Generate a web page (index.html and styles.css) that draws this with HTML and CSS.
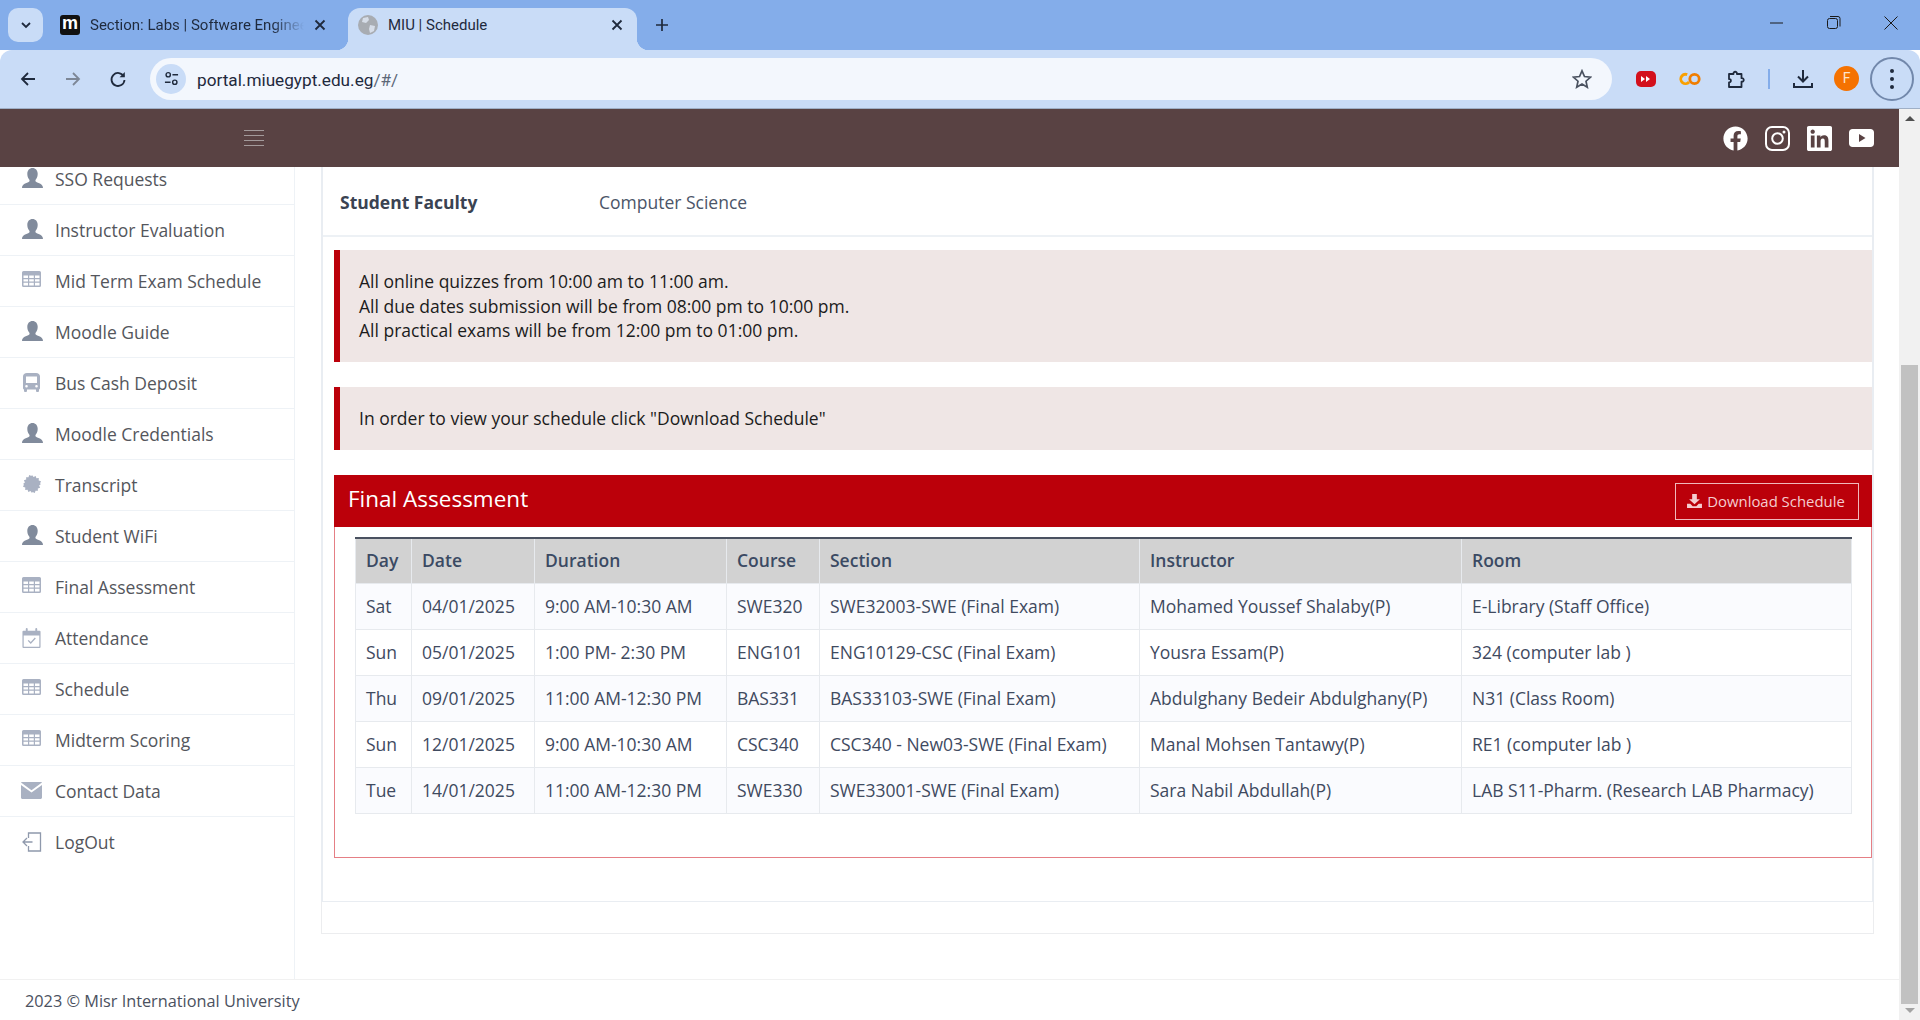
FILE: index.html
```html
<!DOCTYPE html>
<html lang="en">
<head>
    <meta charset="UTF-8">
    <meta name="viewport" content="width=device-width, initial-scale=1.0">
    <title>MIU | Schedule</title>
    <link rel="stylesheet" href="styles.css">
</head>
<body>
    <svg class="sprites" width="0" height="0">
        <symbol id="i-user" viewBox="0 0 21 20"><path d="M0 20c0-4.600 4.600-4.700 7.300-6.600.5-.6.3-1.500-.3-2.200C5.800 9.900 5.300 8 5.300 5.800 5.300 2.400 7.500 0 10.500 0s5.200 2.400 5.200 5.800c0 2.200-.5 4.100-1.700 5.400-.6.700-.8 1.600-.3 2.200C16.400 15.300 21 15.400 21 20z"/></symbol>
        <symbol id="i-table" viewBox="0 0 19 16"><path fill-rule="evenodd" d="M1.500 0h16A1.500 1.500 0 0 1 19 1.500v13a1.500 1.500 0 0 1-1.500 1.500h-16A1.500 1.500 0 0 1 0 14.500v-13A1.500 1.500 0 0 1 1.500 0zM1.500 4.500v2.500h4.500V4.500zm5.700 0v2.500h4.600V4.500zm5.800 0v2.500h4.500V4.500zM1.500 8.200v2.400h4.500V8.200zm5.700 0v2.400h4.600V8.200zm5.800 0v2.400h4.500V8.200zM1.500 11.800v2.700h4.500v-2.700zm5.700 0v2.700h4.600v-2.700zm5.800 0v2.700h4.500v-2.700z"/></symbol>
        <symbol id="i-bus" viewBox="0 0 17 19"><path fill-rule="evenodd" d="M4 0h9c2.400 0 4 1.300 4 3.500V15c0 .8-.4 1.200-1 1.400V18a1 1 0 0 1-1 1h-1a1 1 0 0 1-1-1v-1.500H4V18a1 1 0 0 1-1 1H2a1 1 0 0 1-1-1v-1.600C.4 16.200 0 15.800 0 15V3.500C0 1.300 1.600 0 4 0zM3 3.500v6.500h11V3.500zM3.500 12a1.300 1.300 0 1 0 0 2.600 1.300 1.300 0 0 0 0-2.600zm10 0a1.300 1.300 0 1 0 0 2.600 1.300 1.300 0 0 0 0-2.600z"/></symbol>
        <symbol id="i-cog" viewBox="0 0 18 18"><path d="M9 0l1.500 1.900 2.200-1 .7 2.300 2.400-.1-.1 2.400 2.300.7-1 2.200L18 9l-1.900 1.500 1 2.200-2.300.7.100 2.400-2.400-.1-.7 2.300-2.200-1L9 18l-1.500-1.900-2.200 1-.7-2.300-2.400.1.100-2.400-2.300-.7 1-2.200L0 9l1.900-1.500-1-2.200 2.300-.7-.1-2.400 2.400.1.700-2.300 2.200 1z"/></symbol>
        <symbol id="i-calendar" viewBox="0 0 19 21"><path fill-rule="evenodd" d="M1 3h2.500V1a1 1 0 0 1 2 0v2h8V1a1 1 0 0 1 2 0v2H18a1 1 0 0 1 1 1v16a1 1 0 0 1-1 1H1a1 1 0 0 1-1-1V4a1 1 0 0 1 1-1zM1.300 8v11.700h16.400V8z"/><path d="M5.500 13.500l1-1 2.200 2.200 4.300-4.700 1 1-5.300 5.700z"/></symbol>
        <symbol id="i-mail" viewBox="0 0 21 17"><path d="M1 0h19c.5 0 1 .3 1 .6L10.500 8.200 0 .6C0 .3.500 0 1 0z"/><path d="M0 3l10.500 7.500L21 3v12.500c0 .8-.7 1.500-1.500 1.500h-18C.7 17 0 16.300 0 15.500z"/></symbol>
        <symbol id="i-logout" viewBox="0 0 20 20"><path d="M7 6V1h12v18H7v-5M11 10H1.500M5.500 6l-4 4 4 4" fill="none" stroke="currentColor" stroke-width="1.300"/></symbol>
        <symbol id="i-cross" viewBox="0 0 12 12"><path d="M1.500 1.500l9 9M10.500 1.500l-9 9" fill="none" stroke="currentColor" stroke-width="1.800"/></symbol>
    </svg>

    <div class="tabstrip">
        <div class="tab-menu">
            <svg class="icon-12" viewBox="0 0 12 12"><path d="M2 4l4 4 4-4" fill="none" stroke="#1f2a3d" stroke-width="1.800"/></svg>
        </div>
        <div class="tab">
            <span class="moodle-logo">m</span>
            <span class="tab-title tab-title-fade">Section: Labs | Software Engineering</span>
            <svg class="icon-12"><use href="#i-cross"/></svg>
        </div>
        <div class="tab tab-active">
            <svg class="globe" viewBox="0 0 20 20"><circle cx="10" cy="10" r="10" fill="#a8acb2"/><path d="M5 3l5-1 1 3-3 3-4-1zM12 10l5 1-1 5-4 2-1-4z" fill="#d6dde8"/></svg>
            <span class="tab-title">MIU | Schedule</span>
            <svg class="icon-12"><use href="#i-cross"/></svg>
        </div>
        <svg class="new-tab" viewBox="0 0 14 14"><path d="M7 1v12M1 7h12" stroke="#1f2a3d" stroke-width="1.700"/></svg>
        <div class="window-controls">
            <svg viewBox="0 0 14 14"><path d="M0 7h13" stroke="#1a1a1a" stroke-width="1"/></svg>
            <svg viewBox="0 0 14 14"><rect x=".5" y="2.500" width="10" height="10" rx="2" fill="none" stroke="#1a1a1a"/><path d="M3 .5h8a2 2 0 0 1 2 2v8" fill="none" stroke="#1a1a1a"/></svg>
            <svg viewBox="0 0 14 14"><path d="M.5.500l13 13M13.500.500l-13 13" stroke="#1a1a1a"/></svg>
        </div>
    </div>

    <div class="toolbar">
        <svg class="nav-btn" viewBox="0 0 18 18"><path d="M16 9H3M9 3L3 9l6 6" fill="none" stroke="#1f2a3d" stroke-width="1.800"/></svg>
        <svg class="nav-btn" viewBox="0 0 18 18"><path d="M2 9h13M9 3l6 6-6 6" fill="none" stroke="#7d8796" stroke-width="1.800"/></svg>
        <svg class="nav-btn" viewBox="0 0 18 18"><path d="M14.800 6.500A6.500 6.500 0 1 0 15.500 10" fill="none" stroke="#1f2a3d" stroke-width="1.800"/><path d="M15.800 2v5.200h-5.200z" fill="#1f2a3d"/></svg>
        <div class="omnibox">
            <span class="site-info">
                <svg viewBox="0 0 16 16"><circle cx="4.500" cy="4" r="2.300" fill="none" stroke="#1f2a3d" stroke-width="1.500"/><path d="M9 4h6M1 12h6" stroke="#1f2a3d" stroke-width="1.500"/><circle cx="11.500" cy="12" r="2.300" fill="none" stroke="#1f2a3d" stroke-width="1.500"/></svg>
            </span>
            <span class="url">portal.miuegypt.edu.eg<span class="url-rest">/#/</span></span>
            <svg class="star" viewBox="0 0 20 20"><path d="M10 1.800l2.500 5.700 6.100.6-4.600 4.100 1.300 6-5.300-3.100-5.300 3.100 1.300-6L1.400 8.100l6.100-.6z" fill="none" stroke="#4a5260" stroke-width="1.700"/></svg>
        </div>
        <div class="extensions">
            <svg class="ext-red" viewBox="0 0 20 16"><rect width="20" height="16" rx="5" fill="#d3101c"/><path d="M5 5l4 3-4 3zM10 5l4 3-4 3z" fill="#fff"/></svg>
            <svg class="ext-colab" viewBox="0 0 22 14"><circle cx="6.500" cy="7" r="4.700" fill="none" stroke="#f9a000" stroke-width="2.800" stroke-dasharray="20 10" transform="rotate(40 6.500 7)"/><circle cx="15.500" cy="7" r="4.700" fill="none" stroke="#f07d00" stroke-width="2.800"/></svg>
            <svg class="ext-puzzle" viewBox="0 0 20 20"><path d="M2 5h4.500c-.6-3 4-3 3.400 0H14.500v4.200c3-.6 3 4 0 3.400V18H2v-4.700c2.500.4 2.500-3.600 0-3.200z" fill="none" stroke="#1f2a3d" stroke-width="1.800" stroke-linejoin="round"/></svg>
            <span class="ext-divider"></span>
            <svg class="ext-download" viewBox="0 0 20 20"><path d="M10 1v11M5 7.500l5 5 5-5" fill="none" stroke="#1f2a3d" stroke-width="2"/><path d="M1 14v4h18v-4" fill="none" stroke="#1f2a3d" stroke-width="2"/></svg>
            <span class="avatar">F</span>
            <span class="kebab"><i></i><i></i><i></i></span>
        </div>
    </div>

    <div class="page">
        <div class="viewport">
            <header class="topbar">
                <div class="hamburger"><i></i><i></i><i></i><i></i></div>
                <div class="socials">
                    <svg viewBox="0 0 512 512"><path d="M504 256C504 119 393 8 256 8S8 119 8 256c0 123.780 90.690 226.380 209.250 245V327.690h-63V256h63v-54.640c0-62.150 37-96.480 93.670-96.480 27.140 0 55.520 4.840 55.520 4.840v61h-31.280c-30.800 0-40.410 19.120-40.410 38.730V256h68.780l-11 71.690h-57.780V501C413.310 482.380 504 379.780 504 256z"/></svg>
                    <svg viewBox="0 0 25 25"><rect x="1" y="1" width="23" height="23" rx="6" fill="none" stroke="#fff" stroke-width="2"/><circle cx="12.500" cy="12.500" r="5.300" fill="none" stroke="#fff" stroke-width="2"/><circle cx="19" cy="6" r="1.500"/></svg>
                    <svg viewBox="0 32 448 448" preserveAspectRatio="none"><path d="M416 32H31.900C14.300 32 0 46.500 0 64.300v383.400C0 465.500 14.300 480 31.900 480H416c17.600 0 32-14.500 32-32.300V64.300c0-17.800-14.400-32.300-32-32.300zM135.400 416H69V202.200h66.500V416zm-33.200-243c-21.300 0-38.500-17.300-38.500-38.500S80.900 96 102.200 96c21.200 0 38.500 17.300 38.500 38.500 0 21.300-17.200 38.500-38.500 38.500zm282.100 243h-66.400V312c0-24.800-.5-56.700-34.500-56.700-34.600 0-39.900 27-39.900 54.900V416h-66.400V202.200h63.700v29.200h.9c8.900-16.800 30.600-34.500 62.900-34.500 67.200 0 79.700 44.300 79.700 101.900V416z"/></svg>
                    <svg viewBox="0 0 25 18" class="social-yt"><path fill-rule="evenodd" d="M3.500 0h18C23.500 0 25 1.500 25 3.500v11c0 2-1.500 3.500-3.500 3.500h-18C1.500 18 0 16.500 0 14.500v-11C0 1.500 1.500 0 3.500 0zM10 5v8l6.500-4z"/></svg>
                </div>
            </header>

            <div class="layout">
                <nav class="sidebar">
                    <a class="nav-item"><svg class="nav-icon icon-dark"><use href="#i-user"/></svg>SSO Requests</a>
                    <a class="nav-item"><svg class="nav-icon icon-dark"><use href="#i-user"/></svg>Instructor Evaluation</a>
                    <a class="nav-item"><svg class="nav-icon nav-icon-table"><use href="#i-table"/></svg>Mid Term Exam Schedule</a>
                    <a class="nav-item"><svg class="nav-icon icon-dark"><use href="#i-user"/></svg>Moodle Guide</a>
                    <a class="nav-item"><svg class="nav-icon nav-icon-bus"><use href="#i-bus"/></svg>Bus Cash Deposit</a>
                    <a class="nav-item"><svg class="nav-icon icon-dark"><use href="#i-user"/></svg>Moodle Credentials</a>
                    <a class="nav-item"><svg class="nav-icon nav-icon-cog"><use href="#i-cog"/></svg>Transcript</a>
                    <a class="nav-item"><svg class="nav-icon icon-dark"><use href="#i-user"/></svg>Student WiFi</a>
                    <a class="nav-item"><svg class="nav-icon nav-icon-table"><use href="#i-table"/></svg>Final Assessment</a>
                    <a class="nav-item"><svg class="nav-icon nav-icon-cal"><use href="#i-calendar"/></svg>Attendance</a>
                    <a class="nav-item"><svg class="nav-icon nav-icon-table"><use href="#i-table"/></svg>Schedule</a>
                    <a class="nav-item"><svg class="nav-icon nav-icon-table"><use href="#i-table"/></svg>Midterm Scoring</a>
                    <a class="nav-item"><svg class="nav-icon nav-icon-mail"><use href="#i-mail"/></svg>Contact Data</a>
                    <a class="nav-item nav-item-last"><svg class="nav-icon nav-icon-logout"><use href="#i-logout"/></svg>LogOut</a>
                </nav>

                <main class="content">
                    <div class="card-body">
                        <div class="info-row">
                            <b class="info-label">Student Faculty</b>
                            <span class="info-value">Computer Science</span>
                        </div>
                        <div class="alert alert-tall">
                            All online quizzes from 10:00 am to 11:00 am.<br>
                            All due dates submission will be from 08:00 pm to 10:00 pm.<br>
                            All practical exams will be from 12:00 pm to 01:00 pm.
                        </div>
                        <div class="alert alert-short">In order to view your schedule click "Download Schedule"</div>
                        <section class="panel">
                            <div class="panel-head">
                                <h2>Final Assessment</h2>
                                <button class="download-btn">
                                    <svg viewBox="0 0 16 15"><path d="M5.500 0h5v5.500h3.300L8 11 2.200 5.500h3.300z"/><path d="M0 10.500h3.500L6 13h4l2.500-2.500H16V15H0z"/></svg>
                                    Download Schedule
                                </button>
                            </div>
                            <div class="panel-body">
                                <table class="schedule">
                                    <colgroup>
                                        <col class="col-day"><col class="col-date"><col class="col-duration"><col class="col-course"><col class="col-section"><col class="col-instructor"><col>
                                    </colgroup>
                                    <thead>
                                        <tr><th>Day</th><th>Date</th><th>Duration</th><th>Course</th><th>Section</th><th>Instructor</th><th>Room</th></tr>
                                    </thead>
                                    <tbody>
                                        <tr><td>Sat</td><td>04/01/2025</td><td>9:00 AM-10:30 AM</td><td>SWE320</td><td>SWE32003-SWE (Final Exam)</td><td>Mohamed Youssef Shalaby(P)</td><td>E-Library (Staff Office)</td></tr>
                                        <tr><td>Sun</td><td>05/01/2025</td><td>1:00 PM- 2:30 PM</td><td>ENG101</td><td>ENG10129-CSC (Final Exam)</td><td>Yousra Essam(P)</td><td>324 (computer lab )</td></tr>
                                        <tr><td>Thu</td><td>09/01/2025</td><td>11:00 AM-12:30 PM</td><td>BAS331</td><td>BAS33103-SWE (Final Exam)</td><td>Abdulghany Bedeir Abdulghany(P)</td><td>N31 (Class Room)</td></tr>
                                        <tr><td>Sun</td><td>12/01/2025</td><td>9:00 AM-10:30 AM</td><td>CSC340</td><td>CSC340 - New03-SWE (Final Exam)</td><td>Manal Mohsen Tantawy(P)</td><td>RE1 (computer lab )</td></tr>
                                        <tr><td>Tue</td><td>14/01/2025</td><td>11:00 AM-12:30 PM</td><td>SWE330</td><td>SWE33001-SWE (Final Exam)</td><td>Sara Nabil Abdullah(P)</td><td>LAB S11-Pharm. (Research LAB Pharmacy)</td></tr>
                                    </tbody>
                                </table>
                            </div>
                        </section>
                    </div>
                    <div class="card-foot"></div>
                </main>
            </div>

            <footer class="footer">2023 © Misr International University</footer>
        </div>

        <div class="scrollbar">
            <span class="arrow-up"></span>
            <div class="scroll-track"><div class="scroll-thumb"></div></div>
            <span class="arrow-down"></span>
        </div>
    </div>
</body>
</html>
```
FILE: styles.css
```css
*{
    box-sizing: border-box;
}
html, body{
    height: 100%;
}
body{
    margin: 0;
    display: flex;
    flex-direction: column;
    overflow: hidden;
    background-color: white;
    font-family: "Open Sans", sans-serif;
    color: #3f4a5f;
}
.sprites{
    position: absolute;
}

/* browser chrome */
.tabstrip{
    height: 50px;
    flex: none;
    display: flex;
    align-items: flex-end;
    background-color: #84adea;
    font-family: Roboto, sans-serif;
    font-size: 15px;
    color: #1f2a3d;
}
.tab-menu{
    width: 35px;
    height: 34px;
    margin: 0 9px 8px 8px;
    border-radius: 10px;
    background-color: #c9dcf7;
    display: flex;
    align-items: center;
    justify-content: center;
}
.icon-12{
    width: 12px;
    height: 12px;
    flex: none;
}
.tab{
    position: relative;
    width: 285px;
    height: 42px;
    padding: 0 11px 8px 8px;
    display: flex;
    align-items: center;
    gap: 10px;
}
.tab-active{
    width: 289px;
    margin-left: 11px;
    padding: 0 14px 8px 10px;
    border-radius: 12px 12px 0 0;
    background-color: #c9dcf7;
}
/* the small concave corners where the active tab meets the toolbar */
.tab-active::before, .tab-active::after{
    content: "";
    position: absolute;
    bottom: 0;
    width: 12px;
    height: 12px;
}
.tab-active::before{
    left: -12px;
    background: radial-gradient(circle at 0 0, transparent 12px, #c9dcf7 12.500px);
}
.tab-active::after{
    right: -12px;
    background: radial-gradient(circle at 100% 0, transparent 12px, #c9dcf7 12.500px);
}
.moodle-logo{
    width: 20px;
    height: 20px;
    flex: none;
    border-radius: 3px;
    background-color: #111;
    color: white;
    font: bold 18px/17px "Liberation Sans", sans-serif;
    text-align: center;
}
.tab-title{
    flex: 1;
    white-space: nowrap;
    overflow: hidden;
}
.tab-title-fade{
    -webkit-mask-image: linear-gradient(to right, black 85%, transparent);
    mask-image: linear-gradient(to right, black 85%, transparent);
}
.globe{
    width: 20px;
    height: 20px;
    flex: none;
}
.new-tab{
    width: 14px;
    height: 14px;
    margin: 0 0 18px 18px;
}
.window-controls{
    margin-left: auto;
    padding: 0 22px 20px 0;
    display: flex;
    gap: 43px;
}
.window-controls svg{
    width: 14px;
    height: 14px;
}
.toolbar{
    height: 59px;
    flex: none;
    padding: 0 6px 1px 19px;
    display: flex;
    align-items: center;
    border-bottom: 1px solid #9fafc6;
    border-radius: 12px 12px 0 0;
    background-color: #c9dcf7;
    font-family: Roboto, sans-serif;
}
.nav-btn{
    width: 18px;
    height: 18px;
    margin-right: 27px;
    flex: none;
}
.omnibox{
    width: 1462px;
    height: 42px;
    margin-left: -4px;
    padding: 0 14px 0 6px;
    flex: none;
    display: flex;
    align-items: center;
    border-radius: 21px;
    background-color: #f3f7fd;
    font-size: 17.200px;
    color: #1f2a3d;
}
.site-info{
    width: 30px;
    height: 30px;
    border-radius: 50%;
    background-color: #c9dcf7;
    display: flex;
    align-items: center;
    justify-content: center;
}
.site-info svg{
    width: 15px;
    height: 15px;
}
.url{
    margin-left: 11px;
    padding-top: 2px;
    flex: 1;
}
.url-rest{
    color: #5c6778;
}
.star{
    width: 20px;
    height: 20px;
    margin-right: 6px;
}
.extensions{
    flex: 1;
    display: flex;
    align-items: center;
}
.ext-red{
    width: 20px;
    height: 16px;
    margin-left: 24px;
}
.ext-colab{
    width: 22px;
    height: 14px;
    margin-left: 23px;
}
.ext-puzzle{
    width: 20px;
    height: 20px;
    margin-left: 26px;
}
.ext-divider{
    width: 2px;
    height: 20px;
    margin-left: 21px;
    background-color: #84adea;
}
.ext-download{
    width: 20px;
    height: 20px;
    margin-left: 23px;
}
.avatar{
    width: 25px;
    height: 25px;
    margin-left: 21px;
    border-radius: 50%;
    background-color: #f57200;
    color: #fde3cc;
    font-size: 14px;
    line-height: 25px;
    text-align: center;
}
.kebab{
    width: 44px;
    height: 44px;
    margin-left: 11px;
    flex: none;
    display: flex;
    flex-direction: column;
    align-items: center;
    justify-content: center;
    gap: 4px;
    border: 2px solid #7288ab;
    border-radius: 50%;
}
.kebab i{
    width: 4px;
    height: 4px;
    border-radius: 50%;
    background-color: #1f2a3d;
}

/* page */
.page{
    flex: 1;
    min-height: 0;
    display: flex;
}
.viewport{
    flex: 1;
    min-width: 0;
    display: flex;
    flex-direction: column;
}
.topbar{
    height: 58px;
    flex: none;
    display: flex;
    align-items: center;
    justify-content: space-between;
    background-color: #594243;
}
.hamburger{
    width: 20px;
    margin-left: 244px;
    display: flex;
    flex-direction: column;
    gap: 3.500px;
}
.hamburger i{
    height: 1.500px;
    background-color: #a39a9b;
}
.socials{
    margin-right: 25px;
    display: flex;
    align-items: center;
    gap: 17px;
}
.socials svg{
    width: 25px;
    height: 25px;
    fill: white;
}
.socials .social-yt{
    height: 18px;
}
.layout{
    flex: 1;
    min-height: 0;
    display: flex;
}
.sidebar{
    width: 295px;
    flex: none;
    overflow: hidden;
    border-right: 1px solid #eef2f6;
    font-size: 17.500px;
    color: #54565c;
}
.nav-item{
    height: 51px;
    padding-left: 21px;
    display: flex;
    align-items: center;
    border-bottom: 1px solid #eef2f6;
}
.nav-item:first-child{
    margin-top: -13px;
}
.nav-item-last{
    border-bottom: 0;
    padding-bottom: 2px;
}
.nav-icon{
    width: 21px;
    height: 20px;
    margin-right: 13px;
    flex: none;
    fill: #a9b1c2;
    color: #8f99ac;
}
.nav-icon.icon-dark{
    fill: #818b9c;
    margin-left: 1px;
    margin-right: 12px;
    margin-top: -2px;
}
.nav-icon-table{
    height: 16px;
    width: 19px;
    margin-right: 14px;
    margin-left: 1px;
    margin-top: -4px;
}
.nav-icon-bus{
    height: 19px;
    width: 17px;
    margin: -2px 15px 0 2px;
}
.nav-icon-cog{
    height: 18px;
    width: 18px;
    margin: -2px 14px 0 2px;
}
.nav-icon-cal{
    margin-top: -1px;
}
.nav-icon-mail{
    height: 17px;
    margin-top: -1px;
}
.content{
    flex: 1;
    min-width: 0;
    padding: 0 25px 0 26px;
}
.card-body{
    height: 735px;
    padding-left: 11px;
    border: solid #e9edf2;
    border-width: 0 2px 1px 2px;
}
.info-row{
    height: 70px;
    margin-left: -11px;
    padding: 2px 0 0 17px;
    display: flex;
    align-items: center;
    border-bottom: 2px solid #edf1f5;
    font-size: 17.500px;
}
.info-label{
    width: 259px;
    font-weight: 700;
    color: #3a4352;
}
.info-value{
    color: #4b5568;
}
.alert{
    height: 63px;
    margin-top: 25px;
    padding-left: 19px;
    display: flex;
    align-items: center;
    border-left: 6px solid #bb000a;
    background-color: #efe6e5;
    font-size: 17.500px;
    color: #1c1c1c;
}
.alert-short{
    padding-bottom: 2px;
}
.alert-tall{
    display: block;
    height: 112px;
    margin-top: 13px;
    padding-top: 19px;
    line-height: 24.500px;
}
.panel{
    margin-top: 25px;
}
.panel-head{
    height: 52px;
    padding: 0 13px 0 14px;
    display: flex;
    align-items: center;
    justify-content: space-between;
    background-color: #bb000a;
}
.panel-head h2{
    margin: 0 0 6px;
    font-size: 22.500px;
    font-weight: 400;
    color: white;
}
.download-btn{
    width: 184px;
    height: 37px;
    padding: 0 2px 0 0;
    display: flex;
    align-items: center;
    justify-content: center;
    gap: 5px;
    border: 1px solid #f0b8bb;
    background: none;
    font: 14.900px "Open Sans", sans-serif;
    color: #f5cdd0;
}
.download-btn svg{
    width: 15px;
    height: 14px;
    fill: #f5cdd0;
}
.panel-body{
    height: 331px;
    padding: 10px 20px 0;
    border: 1px solid #e57f85;
    border-top: 0;
}
.schedule{
    width: 1497px;
    table-layout: fixed;
    border-collapse: collapse;
    font-size: 17.500px;
}
.col-day{ width: 56px; }
.col-date{ width: 123px; }
.col-duration{ width: 192px; }
.col-course{ width: 93px; }
.col-section{ width: 320px; }
.col-instructor{ width: 322px; }
.schedule th{
    height: 45px;
    padding: 0 10px 1px;
    border: 1px solid #e7eaee;
    border-top: 2px solid #4a5160;
    background-color: #d2d2d2;
    font-weight: 600;
    text-align: left;
    color: #3b4a63;
}
.schedule td{
    height: 46px;
    padding: 0 10px 1px;
    border: 1px solid #e7eaee;
    background-color: #fafbfe;
    white-space: nowrap;
}
.schedule tbody tr:nth-child(even) td{
    background-color: white;
}
.card-foot{
    height: 32px;
    border: 1px solid #ecedef;
    border-top: 0;
}
.footer{
    height: 41px;
    flex: none;
    padding: 1px 0 0 25px;
    display: flex;
    align-items: center;
    border-top: 1px solid #f1f1f1;
    font-size: 16.300px;
    color: #4b5160;
}

/* page scrollbar */
.scrollbar{
    width: 21px;
    flex: none;
    padding: 7px 2px 7px 2px;
    display: flex;
    flex-direction: column;
    align-items: center;
    background-color: #f1f1f1;
}
.arrow-up, .arrow-down{
    width: 0;
    height: 0;
    flex: none;
    border: 5px solid transparent;
}
.arrow-up{
    border-top: 0;
    border-bottom-color: #505050;
}
.arrow-down{
    border-bottom: 0;
    border-top-color: #a3a3a3;
}
.scroll-track{
    flex: 1;
    width: 100%;
    padding: 244px 0 4px;
}
.scroll-thumb{
    height: 100%;
    background-color: #c1c1c1;
}
```
